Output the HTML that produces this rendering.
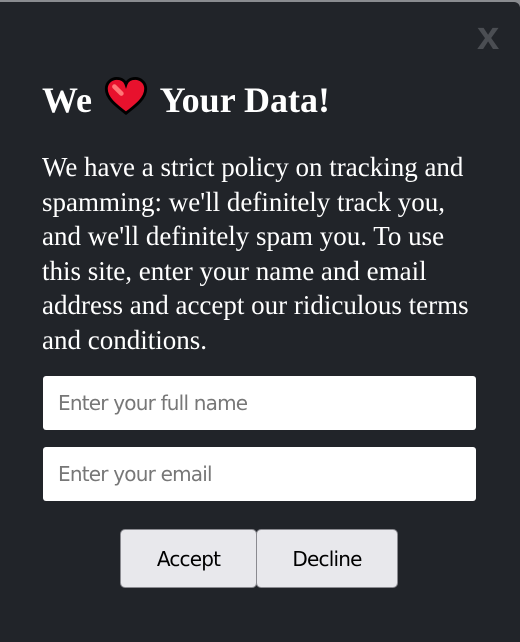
<!DOCTYPE html>
<html><head><style>
html,body{margin:0;padding:0;width:520px;height:628px;overflow:hidden;background:#8a8c90;}
.panel{position:absolute;left:0;top:2px;width:520px;height:640px;background:#212429;border-radius:0 6px 0 0;}
.x{position:absolute;left:477px;top:14px;font:bold 40px "Liberation Sans",sans-serif;color:#4b4e53;}
h1{position:absolute;left:42px;top:77px;margin:0;font:bold 36px "Liberation Serif",serif;color:#fff;white-space:nowrap;}
p{position:absolute;left:42px;top:150px;margin:0;font:27px/34.5px "Liberation Serif",serif;color:#fff;white-space:nowrap;}
.in{position:absolute;left:43px;width:433px;height:54px;background:#fff;border-radius:3px;font:20px "DejaVu Sans","Liberation Sans",sans-serif;color:#777;line-height:54px;text-indent:15px;letter-spacing:-0.8px;}
.b{position:absolute;top:529px;height:59px;background:#e8e8ec;border:1px solid #8a8a90;border-radius:5px;box-sizing:border-box;font:20px "DejaVu Sans","Liberation Sans",sans-serif;color:#000;text-align:center;line-height:59px;letter-spacing:-0.8px;}
</style></head><body>
<div class="panel"></div>
<div class="x">x</div>
<h1>We <svg width="44" height="40" viewBox="0 0 38 34" style="vertical-align:-5px;margin:0 4px 0 3px"><path d="M19 31 C10 24 2 18 2 10 C2 4 7 1 11 1 C15 1 18 3 19 6 C20 3 23 1 27 1 C31 1 36 4 36 10 C36 18 28 24 19 31Z" fill="#e8112d" stroke="#000" stroke-width="2.5"/><path d="M9 8 L15 14" stroke="#f77" stroke-width="4" stroke-linecap="round"/></svg> Your Data!</h1>
<p>We have a strict policy on tracking and<br>spamming: we'll definitely track you,<br>and we'll definitely spam you. To use<br>this site, enter your name and email<br>address and accept our ridiculous terms<br>and conditions.</p>
<div class="in" style="top:376px">Enter your full name</div>
<div class="in" style="top:447px">Enter your email</div>
<div class="b" style="left:120px;width:137px">Accept</div>
<div class="b" style="left:256px;width:142px">Decline</div>
</body></html>
